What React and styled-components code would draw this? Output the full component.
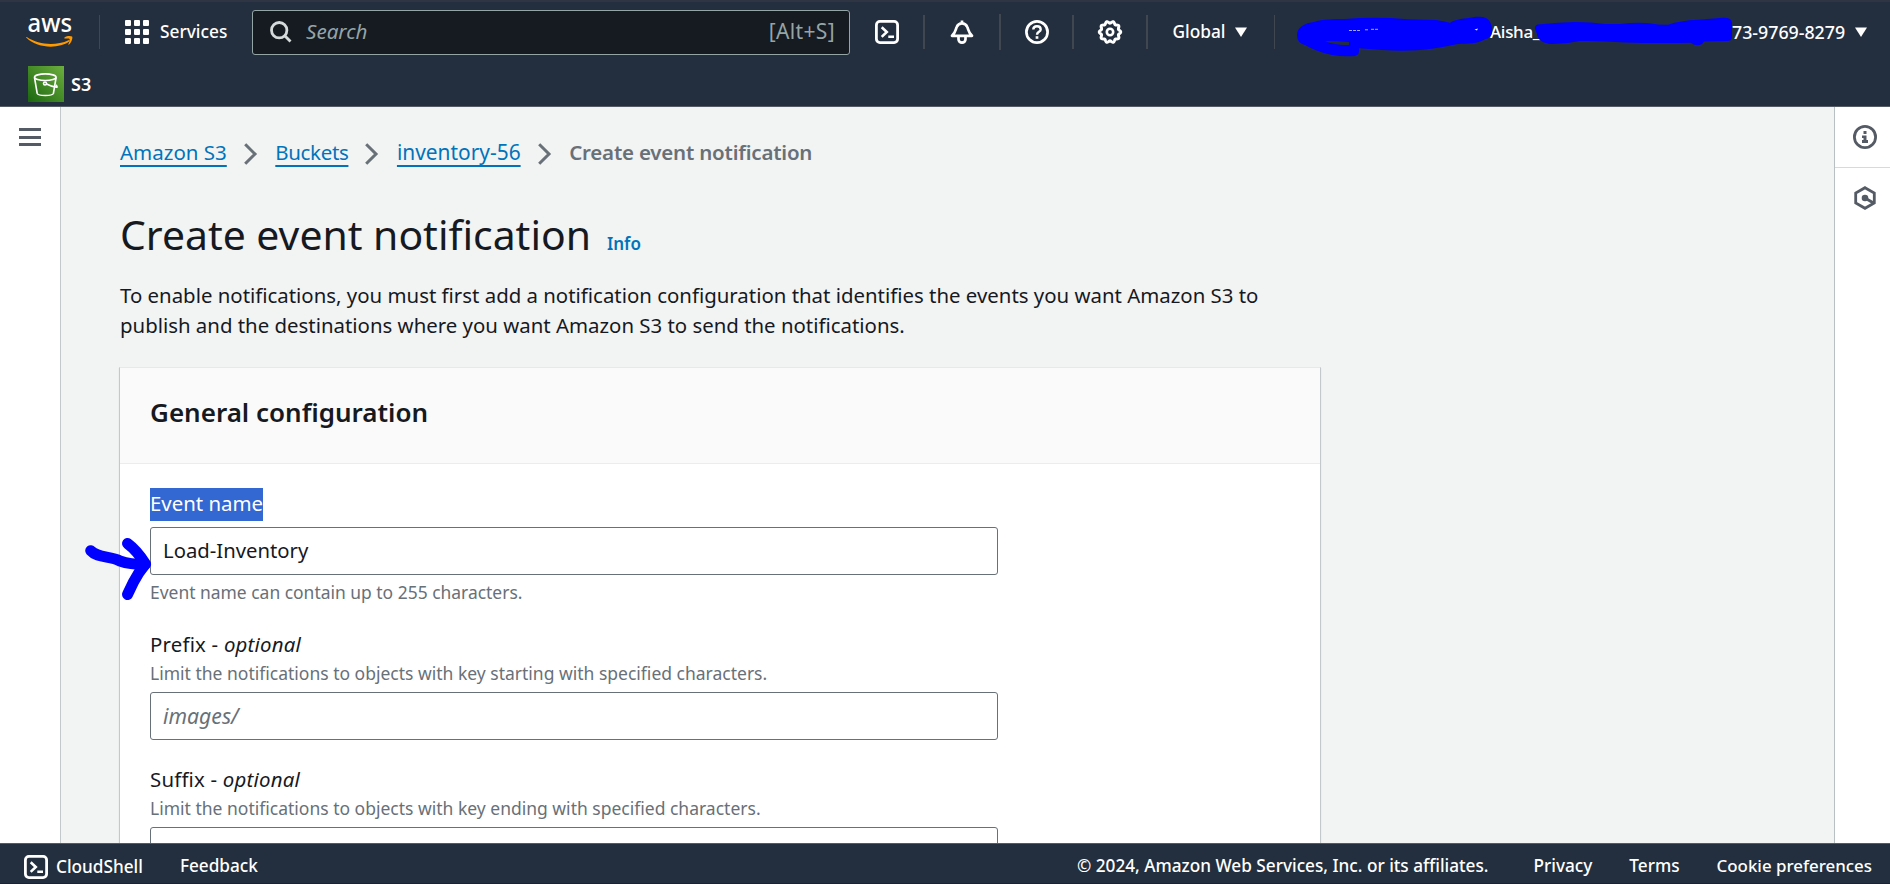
import React from "react";
import styled, { createGlobalStyle, css } from "styled-components";

const GlobalStyle = createGlobalStyle`
  *, *::before, *::after { box-sizing: border-box; }
  body { margin: 0; overflow: hidden; }
  h1, h2, p { margin: 0; }
  svg { display: block; flex: none; overflow: visible; }
`;

const Page = styled.div`
  display: flex;
  flex-direction: column;
  width: 100%;
  height: 884px;
  overflow: hidden;
  background: #f2f3f3;
  color: #16191f;
  font-family: "Noto Sans", "Open Sans", sans-serif;
  font-size: 20.5px;
  white-space: nowrap;
`;

/* ---------- Header ---------- */

const Header = styled.header`
  flex: none;
  height: 107px;
  background: #232f3e;
  border-top: 2px solid #2f3542;
  border-bottom: 1px solid #545b64;
  color: #fff;
  font-size: 17.3px;
  font-weight: 500;
`;

const TopRow = styled.div`
  display: flex;
  align-items: center;
  height: 60px;
  padding-left: 26px;
`;

const LogoSlot = styled.div`
  width: 74px;
  height: 34px;
  border-right: 1px solid #414750;
`;

const ServicesButton = styled.div`
  display: flex;
  align-items: center;
  gap: 11px;
  width: 152px;
  padding-left: 25px;
`;

const NavText = styled.span`
  padding-bottom: 1px;
`;

const AppGrid = styled.div`
  display: grid;
  grid-template-columns: repeat(3, 6px);
  gap: 3px;
`;

const AppDot = styled.i`
  height: 6px;
  border-radius: 1px;
  background: #fff;
`;

const SearchBox = styled.div`
  display: flex;
  align-items: center;
  width: 598px;
  height: 45px;
  margin-top: 1px;
  padding: 0 14px 2px 17px;
  border: 1px solid #95a5a6;
  border-radius: 3px;
  background: #161a21;
  color: #95a5a6;
  font-size: 21px;
  font-weight: 400;
`;

const SearchHint = styled.span`
  flex: 1;
  margin-left: 14px;
  padding-bottom: 1px;
  font-size: 20.6px;
  font-style: italic;
`;

const Shortcut = styled.span`
  padding-bottom: 1px;
  letter-spacing: 0.35px;
`;

const NavSlot = styled.div`
  display: flex;
  flex: none;
  align-items: center;
  justify-content: center;
  width: ${(p) => p.$width}px;
  height: ${(p) => p.$height || 34}px;
  border-right: ${(p) => p.$line || 2}px solid #414750;
`;

const Region = styled.span`
  display: flex;
  align-items: center;
  gap: 9px;
  margin-right: 3px;
`;

const Account = styled.div`
  position: relative;
  display: flex;
  flex: 1;
  align-items: center;
  height: 60px;
  padding-left: 215px;
`;

const UserName = styled.span`
  width: 242px;
  padding-bottom: 1px;
  font-size: 17px;
  letter-spacing: -0.3px;
`;

const AccountId = styled.span`
  width: 123px;
  padding-bottom: 1px;
  font-size: 17.8px;
`;

const MarkerLayer = styled.svg`
  position: absolute;
  top: -2px;
  left: 0;
`;

const Favorites = styled.div`
  display: flex;
  align-items: center;
  gap: 7px;
  height: 44px;
  padding-left: 28px;
  font-size: 18px;
  font-weight: 600;
`;

/* ---------- Body ---------- */

const Body = styled.div`
  display: flex;
  flex: 1;
  min-height: 0;
`;

const NavRail = styled.aside`
  flex: none;
  width: 61px;
  padding: 21px 0 0 19px;
  background: #fff;
  border-right: 1px solid #c3c8ca;
`;

const MenuIcon = styled.div`
  display: flex;
  flex-direction: column;
  justify-content: space-between;
  width: 22px;
  height: 18px;
`;

const MenuBar = styled.i`
  height: 3px;
  background: #545b64;
`;

const ToolRail = styled.aside`
  flex: none;
  width: 56px;
  background: #fff;
  border-left: 1px solid #b9c0c2;
`;

const Tool = styled.div`
  display: flex;
  align-items: center;
  justify-content: center;
  height: ${(p) => (p.$last ? 60 : 61)}px;
  padding-left: 5px;
  border-bottom: ${(p) => (p.$last ? 0 : 1)}px solid #d5dbdb;
`;

const Main = styled.main`
  flex: 1;
  min-width: 0;
  padding: 30px 0 0 59px;
  overflow: hidden;
`;

const Breadcrumbs = styled.nav`
  display: flex;
  align-items: center;
  height: 30px;
  line-height: 30px;
`;

const Crumb = styled.span`
  color: #0073bb;
  font-size: ${(p) => p.$size || 20.5}px;
  letter-spacing: ${(p) => p.$track || 0}px;
  text-decoration: underline 2px;
  text-underline-offset: 5px;
  text-decoration-skip-ink: none;
`;

const CrumbArrow = styled.svg`
  margin: 3px 18.5px 0 17px;
`;

const CurrentCrumb = styled.span`
  color: #687078;
  font-size: 20.5px;
  font-weight: 600;
  letter-spacing: -0.2px;
`;

const TitleRow = styled.div`
  display: flex;
  align-items: baseline;
  gap: 16px;
  height: 50px;
  margin-top: 42px;
  line-height: 50px;
`;

const Title = styled.h1`
  font-size: 40.9px;
  font-weight: 400;
`;

const InfoLink = styled.span`
  color: #0073bb;
  font-size: 17px;
  font-weight: 600;
`;

const Intro = styled.p`
  margin-top: 21px;
  font-size: 20.4px;
  line-height: 30px;
`;

const Card = styled.section`
  width: 1202px;
  margin: 27px 0 0 -1px;
  background: #fff;
  border: 1px solid #c3c8ca;
  border-top-color: #e6e9e9;
  box-shadow: 0 1px 1px rgba(0, 28, 36, 0.12);
`;

const CardHeader = styled.div`
  height: 96px;
  padding: 26px 30px 0;
  background: #fafafa;
  border-bottom: 1px solid #eaeded;
`;

const CardTitle = styled.h2`
  font-size: 26px;
  font-weight: 600;
  line-height: 36px;
`;

const CardBody = styled.div`
  display: flex;
  flex-direction: column;
  align-items: flex-start;
  gap: 24px;
  padding: 24px 30px;
`;

const Field = styled.div`
  width: 848px;
`;

const Label = styled.div`
  width: fit-content;
  font-size: 20.4px;
  line-height: 30px;
  letter-spacing: ${(p) => (p.$selected ? 0 : 0.2)}px;

  ${(p) =>
    p.$selected &&
    css`
      margin-bottom: 6px;
      padding-bottom: 3px;
      background: #3367d1;
      color: #fff;
    `}
`;

const Hint = styled.div`
  margin: ${(p) => (p.$below ? "5px 0 1px" : "2px 0 7px")};
  color: #687078;
  font-size: ${(p) => (p.$below ? 17.45 : 17.5)}px;
  line-height: 24px;
`;

const Input = styled.div`
  height: 48px;
  padding: 0 12px;
  background: #fff;
  border: 1px solid #687078;
  border-radius: 3px;
  font-size: 20.3px;
  line-height: 45px;

  ${(p) =>
    p.$placeholder &&
    css`
      color: #687078;
      font-size: 21.2px;
      font-style: italic;
    `}
`;

const ArrowLayer = styled.svg`
  position: absolute;
  top: 530px;
  left: 80px;
`;

/* ---------- Footer ---------- */

const Footer = styled.footer`
  display: flex;
  flex: none;
  align-items: center;
  gap: 37px;
  height: 41px;
  padding: 3px 18px 0 24px;
  background: #232f3e;
  border-top: 1px solid #545b64;
  border-bottom: 1px solid #1b2130;
  color: #fff;
  font-size: 17.2px;
  font-weight: 500;
`;

const ShellLink = styled.span`
  display: flex;
  align-items: center;
  gap: 8px;
  padding-top: 3px;
`;

const FooterLink = styled.span`
  font-size: ${(p) => p.$size || 17.2}px;
`;

const Copyright = styled.span`
  margin: 0 8px 0 auto;
`;

/* ---------- Icons ---------- */

const AwsLogo = () => (
  <svg width="50" height="34" viewBox="0 0 50 34" fill="none">
    <text x="1.5" y="17.2" fill="#fff" fontSize="25.5" fontWeight="500" textLength="44.5" lengthAdjust="spacingAndGlyphs">aws</text>
    <path d="M.8 22C13 30.2 30 31 42.5 25.2c1-.5 1.8.6.8 1.4C33 33.8 12 34 .4 22.8c-.5-.5-.1-1.1.4-.8z" fill="#ff9900" />
    <path d="M38.5 22.4c2.200-1.400 6-1.700 7.600-.8.8 1-.1 5.300-3 8-.5.4-1 .1-.7-.5.7-1.700 1.700-4.400 1.200-5.200-.6-.7-3.300-.5-4.700-.3-.6 0-.8-.8-.4-1.200z" fill="#ff9900" />
  </svg>
);

const SearchIcon = () => (
  <svg width="22" height="22" viewBox="0 0 22 22" fill="none" stroke="#d5dbdb" strokeWidth="2.8">
    <circle cx="9.2" cy="9.2" r="7.7" />
    <path d="M14.5 14.5L20.5 20.5" />
  </svg>
);

const ShellIcon = () => (
  <svg width="24" height="24" viewBox="0 0 24 24" fill="none" stroke="#fff" strokeWidth="2.8">
    <rect x="1.4" y="1.4" width="21.2" height="21.2" rx="3.5" />
    <path d="M6.7 7.2L11.8 12l-5.1 4.9M13.3 16.8h5.7" strokeWidth="2.6" />
  </svg>
);

const BellIcon = () => (
  <svg width="24" height="24" viewBox="0 0 24 24" fill="none" stroke="#fff" strokeWidth="2.7" strokeLinejoin="round">
    <path d="M12 .5v2.500M2 15.800h20C18.300 12.500 18.600 10 17.300 7 16.500 5 14.500 3.300 12 3.300S7.500 5 6.700 7C5.400 10 5.700 12.500 2 15.800z" />
    <path d="M8.500 16.500v2.700a3.500 3.500 0 0 0 7 0v-2.700" />
  </svg>
);

const HelpIcon = () => (
  <svg width="24" height="24" viewBox="0 0 24 24" fill="none" stroke="#fff" strokeWidth="2.7">
    <circle cx="12" cy="12" r="10.6" />
    <path d="M8.3 9.6C8.3 7.2 10 6.2 12 6.2s3.700 1.100 3.700 3.200c0 2.400-3.700 2.500-3.700 5.300" strokeWidth="2.4" />
    <path d="M12 16.2v2.6" />
  </svg>
);

const gearOutline = Array.from({ length: 120 }, (_, i) => {
  const a = (i / 120) * Math.PI * 2;
  const r = 9.8 + 0.95 * Math.cos(a * 10 + Math.PI);
  return `${(12 + r * Math.sin(a)).toFixed(2)},${(12 - r * Math.cos(a)).toFixed(2)}`;
}).join(" ");

const GearIcon = () => (
  <svg width="24" height="24" viewBox="0 0 24 24" fill="none" stroke="#fff" strokeWidth="2.9">
    <polygon points={gearOutline} />
    <circle cx="12" cy="12" r="3.2" strokeWidth="2.6" />
  </svg>
);

const Caret = () => (
  <svg width="12" height="10" viewBox="0 0 12 10" fill="#fff">
    <path d="M0 .5h12L6 10z" />
  </svg>
);

const BucketIcon = () => (
  <svg width="36" height="36" viewBox="0 0 36 36" fill="none" stroke="#fff" strokeWidth="1.6">
    <defs>
      <linearGradient id="s3" x1="0" y1="1" x2="1" y2="0">
        <stop offset="0" stopColor="#1b660f" />
        <stop offset="1" stopColor="#6cae3e" />
      </linearGradient>
    </defs>
    <rect width="36" height="36" fill="url(#s3)" stroke="none" />
    <ellipse cx="17.3" cy="11.2" rx="10.8" ry="3.3" />
    <path d="M6.5 11.5L9.2 27.500C10.500 30.200 24 30.200 25.400 27.500L28.100 11.500" />
    <circle cx="17" cy="17.5" r="1.5" />
    <path d="M18.500 18c3.500 1.800 7 3 10 3.300.9.100.8-1.100-.8-2.300" />
  </svg>
);

const InfoIcon = () => (
  <svg width="24" height="24" viewBox="0 0 24 24" fill="#545b64">
    <circle cx="12" cy="12" r="10.6" fill="none" stroke="#545b64" strokeWidth="2.8" />
    <path d="M10.500 6h3v3h-3zM9 10.500h4.500V15H15v3H9v-3h1.500v-2H9z" />
  </svg>
);

const HexIcon = () => (
  <svg width="24" height="24" viewBox="0 0 24 24" fill="none" stroke="#545b64" strokeWidth="2.8">
    <path d="M12 1.700l9.300 5.300v10L12 22.300 2.700 17V7z" />
    <circle cx="12" cy="12" r="3.3" fill="#545b64" stroke="none" />
    <path d="M12 12l8.500 5" strokeWidth="3" />
  </svg>
);

const Chevron = () => (
  <CrumbArrow width="13" height="22" viewBox="0 0 13 22" fill="none" stroke="#687078" strokeWidth="3">
    <path d="M1.200 1.200L11 11 1.200 20.800" />
  </CrumbArrow>
);

const Redactions = () => (
  <MarkerLayer width="615" height="62" viewBox="1275 0 615 62" fill="#0000fe">
    <path
      fillRule="evenodd"
      d="M1297 35C1297 27 1305 23 1314 22C1322 19 1334 19 1345 19Q1375 16.500 1408 19.300L1436 20Q1444 21 1450 22.700C1455 19 1466 18.500 1473 17.200C1482 16 1488 17.500 1490 22Q1493 28 1492 33Q1491 38 1485 39.300C1477 44 1468 43.500 1458 44Q1448 46 1432 48.700Q1410 52 1382 50L1359 48.300Q1360 55 1355 56Q1343 57 1332 55Q1317 52 1305 45Q1297 43 1297 35ZM1325 41C1330 43 1336 45 1349 45V42Q1337 41 1325 41Z"
    />
    <path d="M1535 29Q1534 24 1541 24.300Q1558 22.500 1575 22Q1592 22 1605 24L1620 24Q1643 21.500 1658 24.500L1668 24.700Q1680 20.500 1698 19.700L1723 17.800Q1732 17.500 1732 23V37Q1732 41 1727 41L1704 41.500Q1702 45.500 1697 45.300Q1693 45 1691 42.700Q1660 43.500 1625 42.500Q1600 40.500 1580 41Q1566 44 1552 44Q1538 43 1537 34Z" />
    <path d="M1349 30.500h12M1365 29.800h4M1371 29.300h7" stroke="#c8cdf5" strokeDasharray="3 1" opacity=".8" />
    <path d="M1474.500 29.500l3.500-1-1 2z" fill="#e8eaff" />
  </MarkerLayer>
);

const PointerArrow = () => (
  <ArrowLayer width="80" height="75" viewBox="80 530 80 75" fill="none" stroke="#0000fe" strokeWidth="11" strokeLinecap="round" strokeLinejoin="round">
    <path d="M90.700 550.700C97 558 110 556 120 561Q130 564.500 145 564.500" />
    <path d="M127.500 543.500Q137 550.500 145.500 564Q138 573 133.500 582L127.500 594.500" />
  </ArrowLayer>
);

/* ---------- Page ---------- */

export default function App() {
  return (
    <Page>
      <GlobalStyle />
      <Header>
        <TopRow>
          <LogoSlot><AwsLogo /></LogoSlot>
          <ServicesButton>
            <AppGrid>
              {Array.from({ length: 9 }, (_, i) => <AppDot key={i} />)}
            </AppGrid>
            <NavText>Services</NavText>
          </ServicesButton>
          <SearchBox>
            <SearchIcon />
            <SearchHint>Search</SearchHint>
            <Shortcut>[Alt+S]</Shortcut>
          </SearchBox>
          <NavSlot $width={75}><ShellIcon /></NavSlot>
          <NavSlot $width={76} $height={36}><BellIcon /></NavSlot>
          <NavSlot $width={73}><HelpIcon /></NavSlot>
          <NavSlot $width={74}><GearIcon /></NavSlot>
          <NavSlot $width={127} $line={1}>
            <Region><NavText>Global</NavText> <Caret /></Region>
          </NavSlot>
          <Account>
            <UserName>Aisha_</UserName>
            <AccountId>73-9769-8279</AccountId>
            <Caret />
            <Redactions />
          </Account>
        </TopRow>
        <Favorites><BucketIcon /><NavText>S3</NavText></Favorites>
      </Header>

      <Body>
        <NavRail>
          <MenuIcon><MenuBar /><MenuBar /><MenuBar /></MenuIcon>
        </NavRail>
        <Main>
          <Breadcrumbs>
            <Crumb>Amazon S3</Crumb>
            <Chevron />
            <Crumb $track={-0.35}>Buckets</Crumb>
            <Chevron />
            <Crumb $size={20.9}>inventory-56</Crumb>
            <Chevron />
            <CurrentCrumb>Create event notification</CurrentCrumb>
          </Breadcrumbs>
          <TitleRow>
            <Title>Create event notification</Title>
            <InfoLink>Info</InfoLink>
          </TitleRow>
          <Intro>
            To enable notifications, you must first add a notification configuration that identifies the events you want Amazon S3 to
            <br />
            publish and the destinations where you want Amazon S3 to send the notifications.
          </Intro>
          <Card>
            <CardHeader><CardTitle>General configuration</CardTitle></CardHeader>
            <CardBody>
              <Field>
                <Label $selected>Event name</Label>
                <Input>Load-Inventory</Input>
                <Hint $below>Event name can contain up to 255 characters.</Hint>
              </Field>
              <Field>
                <Label>Prefix - <em>optional</em></Label>
                <Hint>Limit the notifications to objects with key starting with specified characters.</Hint>
                <Input $placeholder>images/</Input>
              </Field>
              <Field>
                <Label>Suffix - <em>optional</em></Label>
                <Hint>Limit the notifications to objects with key ending with specified characters.</Hint>
                <Input />
              </Field>
            </CardBody>
          </Card>
        </Main>
        <ToolRail>
          <Tool><InfoIcon /></Tool>
          <Tool $last><HexIcon /></Tool>
        </ToolRail>
      </Body>

      <Footer>
        <ShellLink><ShellIcon />CloudShell</ShellLink>
        <FooterLink>Feedback</FooterLink>
        <Copyright>© 2024, Amazon Web Services, Inc. or its affiliates.</Copyright>
        <FooterLink>Privacy</FooterLink>
        <FooterLink>Terms</FooterLink>
        <FooterLink $size={16.9}>Cookie preferences</FooterLink>
      </Footer>
      <PointerArrow />
    </Page>
  );
}
